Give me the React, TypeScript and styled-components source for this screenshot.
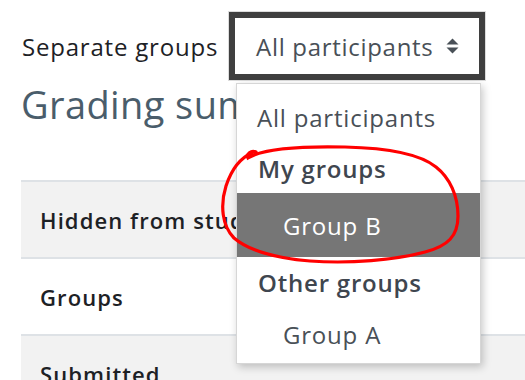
import React from 'react';
import styled, { createGlobalStyle } from 'styled-components';

const GlobalStyle = createGlobalStyle`
  html, body {
    margin: 0;
    padding: 0;
    background: #fff;
    overflow: hidden;
  }
  body {
    font-family: "Open Sans", "Liberation Sans", sans-serif;
    color: #1d2125;
  }
`;

const Page = styled.div`
  position: relative;
  width: 525px;
  height: 380px;
  overflow: hidden;
  padding: 12px 0 0 21px;
  box-sizing: border-box;
`;

const GroupBar = styled.div`
  display: flex;
  align-items: center;
  height: 68px;
`;

const Label = styled.span`
  font-size: 24px;
  letter-spacing: 0.8px;
  color: #1d2125;
  padding-left: 1px;
  width: 207px;
  white-space: nowrap;
`;

const SelectBox = styled.div`
  display: flex;
  align-items: center;
  justify-content: space-between;
  width: 256px;
  height: 68px;
  box-sizing: border-box;
  border: 6px solid #3f3f3f;
  box-shadow: 0 0 0 1px #dcdcdc;
  padding: 0 20px 0 21px;
  font-size: 24px;
  letter-spacing: 0.7px;
  color: #495057;
  background: #fff;
  white-space: nowrap;
`;

const Heading = styled.h2`
  margin: 0;
  font-size: 38px;
  font-weight: 400;
  letter-spacing: 0.4px;
  color: #4a5d6b;
  line-height: 48px;
  height: 100px;
  white-space: nowrap;
`;

const Table = styled.div`
  width: 520px;
  border-top: 2px solid #dee2e6;
`;

const Row = styled.div<{ $shade?: boolean }>`
  display: flex;
  align-items: center;
  height: 75px;
  padding-left: 19px;
  background: ${(p) => (p.$shade ? '#f2f2f2' : '#fff')};
  border-bottom: 2px solid #dee2e6;
  font-size: 22px;
  letter-spacing: 1.1px;
  font-weight: 600;
  color: #1d2125;
  white-space: nowrap;
`;

const Menu = styled.div`
  position: absolute;
  left: 236px;
  top: 83px;
  width: 245px;
  height: 281px;
  box-sizing: border-box;
  background: #fff;
  border: 1px solid #d6d6d6;
  box-shadow: 2px 3px 8px rgba(0, 0, 0, 0.22);
  padding-top: 7px;
`;

const Option = styled.div<{ $indent?: boolean; $active?: boolean; $h: number }>`
  display: flex;
  align-items: center;
  height: ${(p) => p.$h}px;
  padding-left: ${(p) => (p.$indent ? 46 : 20)}px;
  font-size: 24px;
  letter-spacing: 0.8px;
  white-space: nowrap;
  color: ${(p) => (p.$active ? '#fff' : '#495057')};
  background: ${(p) => (p.$active ? '#767676' : 'transparent')};
`;

const GroupLabel = styled(Option)`
  font-weight: 600;
  color: #3f464f;
  padding-left: 21px;
`;

const Annotation = styled.svg`
  position: absolute;
  left: 0;
  top: 0;
  pointer-events: none;
`;

const SortIcon = () => (
  <svg width="13" height="16" viewBox="0 0 13 16">
    <path d="M6.5 0.5 L12.5 6.5 L0.5 6.5 Z" fill="#495057" />
    <path d="M0.5 9.5 L12.5 9.5 L6.5 15.5 Z" fill="#495057" />
  </svg>
);

export default function App() {
  return (
    <Page>
      <GlobalStyle />
      <GroupBar>
        <Label>Separate groups</Label>
        <SelectBox>
          <span>All participants</span>
          <SortIcon />
        </SelectBox>
      </GroupBar>
      <Heading>Grading summary</Heading>
      <Table>
        <Row $shade>Hidden from students</Row>
        <Row>Groups</Row>
        <Row $shade>Submitted</Row>
      </Table>

      <Menu>
        <Option $h={52}>All participants</Option>
        <GroupLabel $h={50}>My groups</GroupLabel>
        <Option $h={64} $indent $active>Group B</Option>
        <GroupLabel $h={50}>Other groups</GroupLabel>
        <Option $h={54} $indent>Group A</Option>
      </Menu>

      <Annotation width="525" height="380" viewBox="0 0 525 380">
        <path
          d="M256 152 C251 150 246 154 248 158 C262 149 300 146 345 147 C390 148 420 154 436 167 C450 178 458 196 458 216 C458 236 448 246 425 252 C395 260 350 264 310 261 C275 258 248 250 234 238 C222 226 220 205 226 186 C232 168 240 158 252 153"
          fill="none"
          stroke="#f00"
          strokeWidth="3.2"
          strokeLinecap="round"
        />
      </Annotation>
    </Page>
  );
}
